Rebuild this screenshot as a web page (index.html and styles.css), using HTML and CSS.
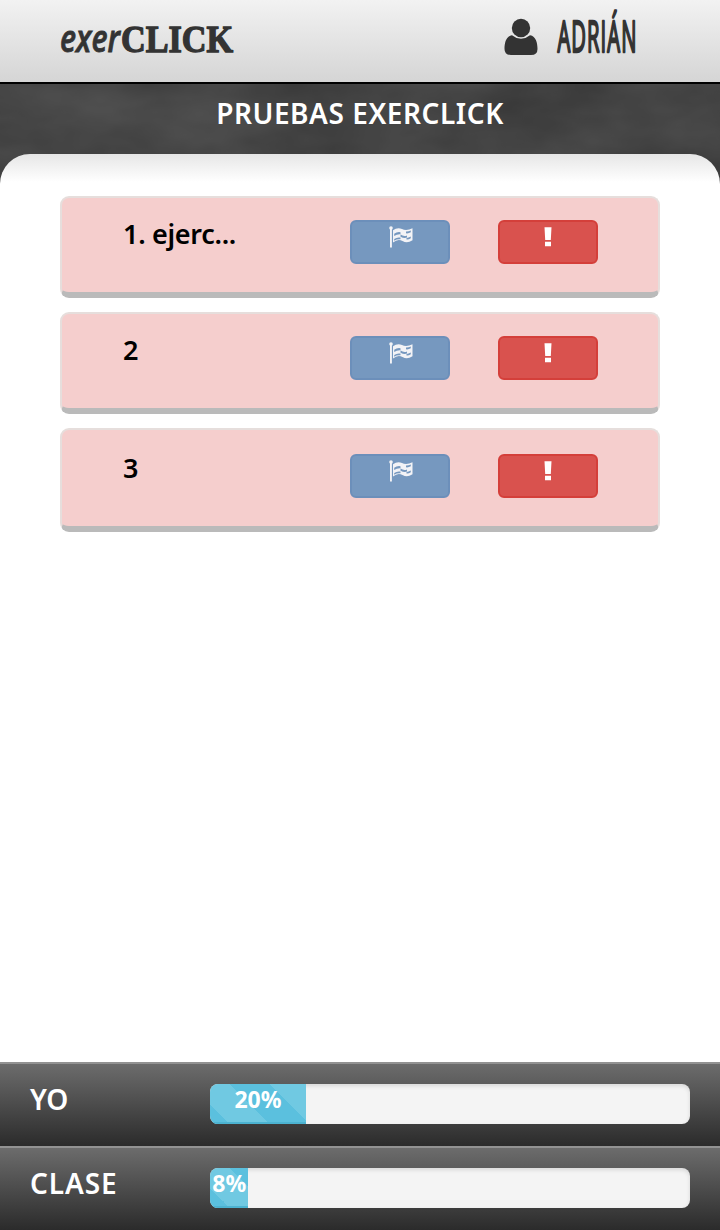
FILE: index.html
```html
<!DOCTYPE html>
<html lang="es">
<head>
<meta charset="utf-8">
<title>exerCLICK</title>
<link rel="stylesheet" href="styles.css">
</head>
<body>
<svg class="defs" aria-hidden="true">
  <symbol id="flag" viewBox="0 0 24 22">
    <circle cx="2" cy="2" r="1.800"/>
    <path d="M1 3h1.900v18.500H1z"/>
    <path fill-rule="evenodd" d="M4 4.200Q8.500 .8 13 3T23.500 2.200V14.300Q18 17.800 13.500 15T4 16.500zM5.200 7.800Q8 5.600 11.500 6.200V8.300Q8 8 5.200 10zM11.500 8.600Q15 11 18 9.500V11.600Q15 12.600 11.500 10.700zM17 5.400Q19.500 5.500 21.800 4.400V6.300Q19.500 7.700 17 7.300zM5.200 13.100Q8 10.900 11.500 11.600V13.300Q8 12.900 5.200 14.700zM17.500 12Q19.500 11.800 21.800 10.500V12.200Q19.500 13.800 17.500 13.500z"/>
  </symbol>
  <symbol id="alert" viewBox="0 0 8 20">
    <path d="M.5.3h7L6.800 13H1.200zM1 14.700h6v4.600H1z"/>
  </symbol>
</svg>

<header class="topbar">
  <svg class="logo" width="180" height="50" viewBox="0 0 180 50">
    <text class="logo-hand" x="1" y="36" textLength="60" lengthAdjust="spacingAndGlyphs">exer</text>
    <text class="logo-serif" x="62" y="36" textLength="112" lengthAdjust="spacingAndGlyphs">CLICK</text>
  </svg>
  <div class="user">
    <svg class="user-icon" width="34" height="38" viewBox="0 0 34 38">
      <circle cx="17" cy="10" r="9.200"/>
      <path d="M8 17.200C2 18 .5 25 .5 31Q.5 37 7 37H27Q33.500 37 33.500 31C33.500 25 32 18 26 17.200Q17 24.500 8 17.200z"/>
    </svg>
    <svg class="user-name" width="84" height="50" viewBox="0 0 84 50">
      <text x="3" y="42.500" textLength="172" transform="scale(.46 1)">ADRIÁN</text>
    </svg>
  </div>
</header>

<section class="board">
  <svg class="chalk" width="720" height="110" aria-hidden="true">
    <filter id="dust" x="0" y="0" width="100%" height="100%">
      <feTurbulence type="fractalNoise" baseFrequency=".008 .016" numOctaves="4" seed="8"/>
      <feColorMatrix values="0 0 0 0 1  0 0 0 0 1  0 0 0 0 1  .16 0 0 0 -.03"/>
    </filter>
    <rect width="720" height="110" filter="url(#dust)"/>
  </svg>
  <h1 class="title">PRUEBAS EXERCLICK</h1>
</section>

<main class="sheet">
  <article class="card">
    <span class="card-name">1. ejerc...</span>
    <button class="btn btn-flag"><svg width="24" height="22"><use href="#flag"/></svg></button>
    <button class="btn btn-alert"><svg width="8" height="20"><use href="#alert"/></svg></button>
  </article>
  <article class="card">
    <span class="card-name">2</span>
    <button class="btn btn-flag"><svg width="24" height="22"><use href="#flag"/></svg></button>
    <button class="btn btn-alert"><svg width="8" height="20"><use href="#alert"/></svg></button>
  </article>
  <article class="card card-last">
    <span class="card-name">3</span>
    <button class="btn btn-flag"><svg width="24" height="22"><use href="#flag"/></svg></button>
    <button class="btn btn-alert"><svg width="8" height="20"><use href="#alert"/></svg></button>
  </article>
</main>

<footer>
  <div class="score">
    <span class="score-name">YO</span>
    <div class="track"><div class="fill" style="width:20%">20%</div></div>
  </div>
  <div class="score">
    <span class="score-name score-class">CLASE</span>
    <div class="track"><div class="fill" style="width:8%">8%</div></div>
  </div>
</footer>
</body>
</html>
```

FILE: styles.css
```css
* { box-sizing: border-box; }

body {
  margin: 0;
  height: 1230px;
  display: flex;
  flex-direction: column;
  overflow: hidden;
  background: #fff;
  font-family: "Noto Sans", "Open Sans", sans-serif;
  font-weight: 600;
}

.defs { position: absolute; width: 0; height: 0; }

.topbar {
  height: 84px;
  flex: none;
  display: flex;
  justify-content: space-between;
  align-items: flex-start;
  padding: 9px 80px 0 59px;
  border-bottom: 2px solid #000;
  background: linear-gradient(#f2f2f2, #d5d5d5);
}
.logo { margin-top: 7px; fill: #333; overflow: visible; }
.logo-hand { font: italic 600 37px "Open Sans", sans-serif; stroke: #333; stroke-width: .8; }
.logo-serif { font: bold 38px "Liberation Serif", serif; stroke: #333; stroke-width: 1.3; }

.user { display: flex; gap: 18px; fill: #333; }
.user-icon { margin-top: 9px; }
.user-name { overflow: visible; }
.user-name text { font: 500 44px "Open Sans", sans-serif; stroke: #333; stroke-width: 2.4; stroke-linejoin: round; }

/* Extends under the sheet so its rounded corners show the blackboard. */
.board {
  position: relative;
  height: 110px;
  margin-bottom: -40px;
  flex: none;
  background: #3a3a3a;
}
.chalk { position: absolute; top: 0; left: 0; }
.title {
  position: relative;
  margin: 0;
  padding-top: 10px;
  color: #fff;
  font-size: 28px;
  font-weight: 600;
  letter-spacing: .55px;
  line-height: 38px;
  text-align: center;
  white-space: nowrap;
}

.sheet {
  position: relative;
  flex: 1;
  display: flex;
  flex-direction: column;
  gap: 14px;
  padding: 42px 60px 0;
  border-radius: 30px 30px 0 0;
  background: linear-gradient(#e6e6e6, #fff 28px);
}

.card {
  height: 102px;
  display: grid;
  grid-template-columns: 179px 100px 100px;
  column-gap: 48px;
  align-items: start;
  padding: 22px 0 0 61px;
  border: 2px solid #e6dedc;
  border-bottom: 6px solid #bababa;
  border-radius: 9px;
  background: #f5cecd;
}
.card-last { height: 104px; padding-top: 24px; }
.card-name {
  margin-top: -4px;
  color: #000;
  font-size: 27px;
  letter-spacing: -.3px;
  line-height: 36px;
}

.btn {
  height: 44px;
  display: flex;
  justify-content: center;
  align-items: flex-start;
  padding: 4px 0 0;
  border: 2px solid;
  border-radius: 6px;
}
.btn-flag { padding-left: 1px; background: #7698bf; border-color: #6c8fba; fill: #f3f3f6; }
.btn-alert { padding-top: 5px; background: #d9524e; border-color: #d43f3a; fill: #fff; }

footer { flex: none; }
.score {
  height: 84px;
  display: flex;
  padding: 20px 30px 0;
  border-top: 2px solid #929292;
  background: linear-gradient(#6c6c6c, #2b2b2b);
}
.score-name {
  width: 180px;
  color: #fff;
  font-size: 28px;
  line-height: 30px;
}
.score-class { letter-spacing: .9px; }
.track {
  width: 480px;
  height: 40px;
  overflow: hidden;
  border-radius: 8px;
  background: #f4f4f4;
  box-shadow: inset 0 2px 4px rgba(0, 0, 0, .12);
}
.fill {
  height: 40px;
  color: #fff;
  font-size: 23px;
  font-weight: 700;
  line-height: 30px;
  text-align: center;
  background: linear-gradient(45deg, #5bc0de 25%, #70c9e2 25%, #70c9e2 50%, #5bc0de 50%, #5bc0de 75%, #70c9e2 75%) -20px -40px / 80px 80px;
  box-shadow: inset 0 -2px 0 #4cb3d1;
}
```
